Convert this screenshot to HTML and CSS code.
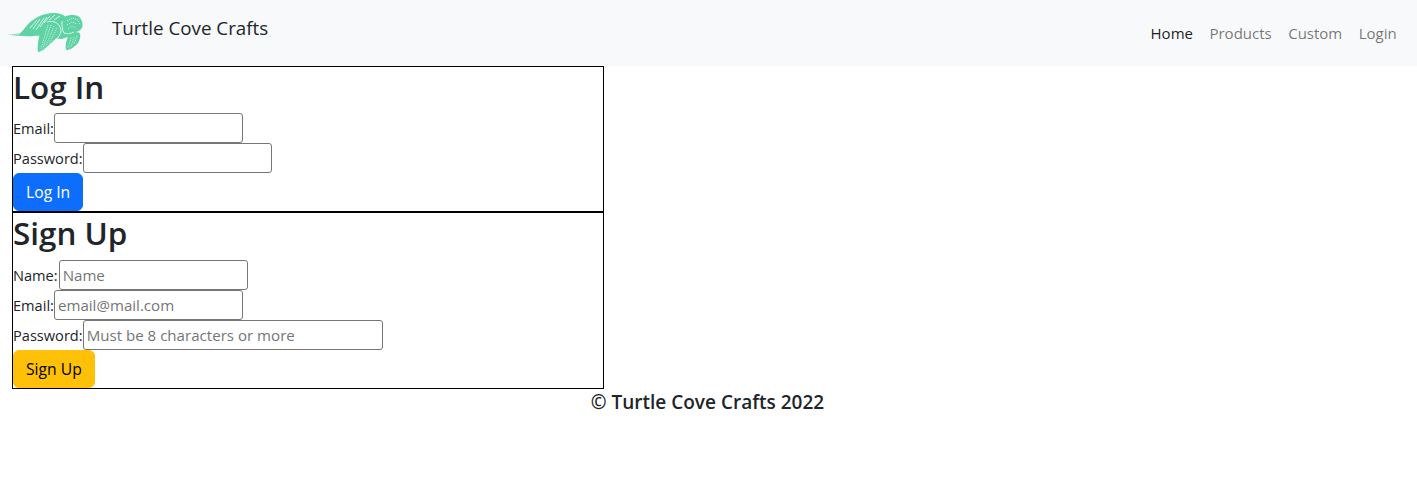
FILE: index.html
```html
<!DOCTYPE html>
<html lang="en">
<head>
<meta charset="utf-8">
<title>Turtle Cove Crafts</title>
<link rel="stylesheet" href="styles.css">
</head>
<body>
<nav class="navbar">
  <div class="brand">
    <svg class="logo" viewBox="8 12 76 42" width="76" height="42" aria-hidden="true">
      <path class="t-fill" d="M8 34.500 L20 33.500 C24 30 27 24 33 20 C39 15.500 47 13 54 13 C59 13 63 14.500 65 16.500 C69 15 74 14.500 78 16 C81 18 83 22 82.500 26 C82 29 80 31 76 32 L80 33 C78 35 72 37 66 37.500 L62 39 C55 38.500 52 37 49 37 C44 36 38 35.500 34 36 C26 36.500 16 36 8 34.500 Z"/>
      <path class="t-fill" d="M48 22 C54 21 60 24 60 30 C60 36 54 40 50 44 C46 48 42 51 38 52.500 C37 47 38 40 40 34 C42 29 44 25 48 22 Z"/>
      <path class="t-fill" d="M68 37 L80 33.500 C81 38 79 43 75 46 C72 48.500 69 50 66 50 C65 46 66 41 68 37 Z"/>
      <g class="t-cut">
        <path d="M30 28 L37 20 M33 29 L40 19 M36 30 L44 18 M40 27 L47 17 M44 23 L50 16 M49 20 L55 15 M54 20 L60 16"/>
        <path d="M47 22 C53 20 60 23 61 30 C61 36 56 39 52 43" />
        <path d="M62 21 C62 26 62 30 64 33 C67 34 70 34 74 32" />
      </g>
      <g class="t-dots">
        <path d="M48 25 L41 49 M51 25 L43 48 M54 26 L46 46 M57 28 L49 44"/>
        <path d="M71 38 L68 48 M74 37 L71 47 M77 36 L74 44"/>
        <path d="M67 21 L72 18 L78 20 L80 25 M67 25 L72 22 L77 24 M68 29 L72 26 L76 28"/>
        <path d="M11 34.500 L20 34.500"/>
      </g>
    </svg>
    <span class="brand-name">Turtle Cove Crafts</span>
  </div>
  <ul class="nav-links">
    <li><a class="nav-link active" href="#">Home</a></li>
    <li><a class="nav-link" href="#">Products</a></li>
    <li><a class="nav-link" href="#">Custom</a></li>
    <li><a class="nav-link" href="#">Login</a></li>
  </ul>
</nav>
<main class="forms">
  <form class="panel">
    <h2>Log In</h2>
    <div class="row"><label>Email:</label><input class="field" type="email"></div>
    <div class="row"><label>Password:</label><input class="field" type="password"></div>
    <button class="btn btn-blue" type="button">Log In</button>
  </form>
  <form class="panel">
    <h2>Sign Up</h2>
    <div class="row"><label class="label-name">Name:</label><input class="field" type="text" placeholder="Name"></div>
    <div class="row"><label>Email:</label><input class="field" type="email" placeholder="email@mail.com"></div>
    <div class="row"><label>Password:</label><input class="field field-wide" type="password" placeholder="Must be 8 characters or more"></div>
    <button class="btn btn-yellow" type="button">Sign Up</button>
  </form>
</main>
<footer class="footer">© Turtle Cove Crafts 2022</footer>
</body>
</html>
```
FILE: styles.css
```css
* { box-sizing: border-box; }
body {
  margin: 0;
  font-family: "Open Sans", "Noto Sans", sans-serif;
  font-size: 15px;
  line-height: 24px;
  color: #212529;
  background: #fff;
}
.navbar {
  height: 66px;
  background: #f8f9fa;
  display: flex;
  justify-content: space-between;
  padding: 0 12px 0 8px;
}
.brand { display: flex; align-items: flex-start; }
.logo { display: block; margin-top: 12px; }
.t-fill { fill: #5ed3a4; }
.t-cut { fill: none; stroke: #f8f9fa; stroke-width: .8; }
.t-dots { fill: none; stroke: #f8f9fa; stroke-width: .7; stroke-dasharray: 1.200 1; }
.brand-name {
  margin: 13px 0 0 28px;
  font-size: 18.800px;
  line-height: 30px;
}
.nav-links {
  display: flex;
  list-style: none;
  margin: 21px 0 0;
  padding: 0;
}
.nav-link {
  display: block;
  padding: 0 8.250px;
  color: rgba(0,0,0,.55);
  text-decoration: none;
}
.nav-link.active { color: rgba(0,0,0,.9); }
.forms { padding: 0 12px; }
.panel {
  width: 592px;
  border: 1px solid #000;
  display: block;
}
.panel h2 {
  margin: 0 0 7px;
  padding-top: 1px;
  font-size: 31.400px;
  font-weight: 600;
  line-height: 38.400px;
  color: #212529;
}
.row { display: flex; align-items: center; height: 30px; font-size: 14.600px; }
.label-name { margin-right: 1px; }
.field {
  width: 189px;
  height: 30px;
  padding: 1px 3px;
  border: 1px solid #767676;
  border-radius: 3px;
  background: #fff;
  font: inherit;
  font-size: 15.100px;
}
.field-wide { width: 300px; }
.field::placeholder { color: #757575; }
.btn {
  display: block;
  height: 38px;
  padding: 0 12px;
  border: 1px solid transparent;
  border-radius: 6px;
  font: inherit;
  font-size: 15.700px;
}
.btn-blue { background: #0d6efd; border-color: #0d6efd; color: #fff; }
.btn-yellow { background: #ffc107; border-color: #ffc107; color: #000; }
.footer {
  margin-top: 1px;
  padding-right: 2px;
  text-align: center;
  font-size: 19px;
  font-weight: 600;
  line-height: 24px;
  color: #212529;
}
```
